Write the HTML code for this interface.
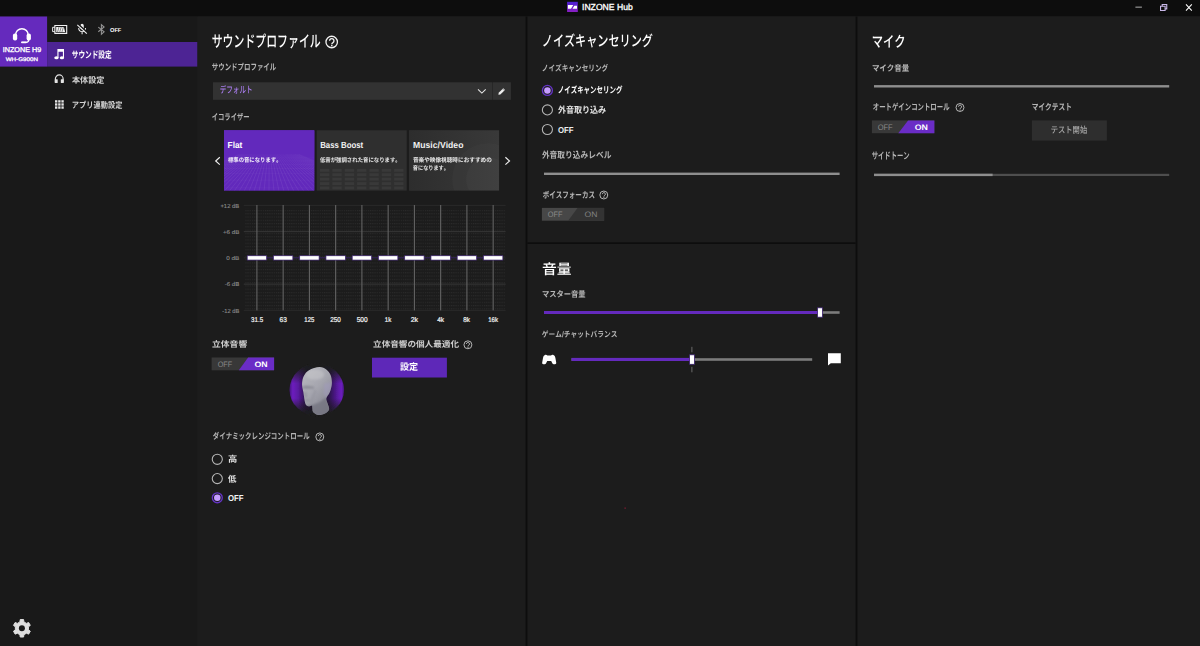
<!DOCTYPE html>
<html lang="ja"><head><meta charset="utf-8"><title>INZONE Hub</title><style>
html,body{margin:0;padding:0}
body{position:relative;width:1200px;height:646px;overflow:hidden;background:#1c1c1c;font-family:"Liberation Sans",sans-serif;font-kerning:none}
.b{position:absolute;display:block;overflow:visible;margin:0;padding:0;border:0}
button.b{appearance:none;-webkit-appearance:none;border-radius:0;background:none}
.jp{position:absolute;display:block;margin:0;padding:0;font-weight:normal;text-decoration:none;white-space:nowrap;transform-origin:0 0;text-indent:1px;font-family:"Liberation Sans","Noto Sans CJK JP",sans-serif;text-rendering:geometricPrecision}
.f{position:absolute;left:0;top:0;width:100%;height:100%;display:block}
.lt{position:absolute;display:block;white-space:nowrap;transform-origin:0 0;margin:0;padding:0;text-rendering:geometricPrecision}
</style></head>
<body>
<header>
<div class="b titlebar" style="left:0px;top:0px;width:1200px;height:17px;"><svg class="f" viewBox="0 0 1200 17"><rect x="0.00" y="0.00" width="1200.00" height="16.50" fill="#0d0d0d"/></svg></div>
<svg class="b" style="left:566px;top:0px;width:13px;height:13px;" viewBox="0 0 13 13"><svg x="1.10" y="1.80" width="10.70" height="10.20" viewBox="0 0 10.7 10.2" preserveAspectRatio="none" overflow="visible"><defs><linearGradient id="lg" x1="0" y1="0" x2="0" y2="1"><stop offset="0" stop-color="#4a1fd2"/><stop offset="1" stop-color="#8a1fc2"/></linearGradient></defs><rect width="10.7" height="10.2" fill="url(#lg)"/><path d="M.8 3.1H6.2L3.9 6.9H.8zM7.2 3.9L5.4 6.9H9.9V3.9z" fill="#fff"/></svg></svg>
<span class="lt apptitle" style="left:582px;top:2px;font-size:87.15px;line-height:87.15px;transform:translate(0.00px,0.54px) scale(0.0989,0.1000);color:#fff;-webkit-text-stroke:3.20px #fff;">INZONE Hub</span>
<svg class="b" style="left:1134px;top:5px;width:9px;height:4px;" viewBox="0 0 9 4"><svg x="1.40" y="1.60" width="6.50" height="1.10" viewBox="0 0 6.5 1.1" preserveAspectRatio="none" overflow="visible"><rect width="6.5" height="1.1" fill="#a0a0a0"/></svg></svg>
<svg class="b" style="left:1159px;top:3px;width:10px;height:9px;" viewBox="0 0 10 9"><svg x="1.00" y="1.00" width="7.30" height="7.00" viewBox="0 0 7.3 7" preserveAspectRatio="none" overflow="visible"><path d="M.55 2.2H5.1V6.5H.55z" fill="none" stroke="#c9b8e8" stroke-width="1.1"/><path d="M2.2 2.2V.55H6.75V4.9H5.1" fill="none" stroke="#c9b8e8" stroke-width="1.1"/></svg></svg>
<svg class="b" style="left:1184px;top:3px;width:10px;height:9px;" viewBox="0 0 10 9"><svg x="1.60" y="1.00" width="6.60" height="7.00" viewBox="0 0 6.6 7" preserveAspectRatio="none" overflow="visible"><path d="M.4.4L6.2 6.6M6.2.4L.4 6.6" stroke="#fff" stroke-width="1.05" fill="none"/></svg></svg>
</header>
<nav>
<div class="b sidebar" style="left:0px;top:16px;width:198px;height:630px;"><svg class="f" viewBox="0 0 198 630"><rect x="0.00" y="0.50" width="197.50" height="629.50" fill="#191919"/></svg></div>
<div class="b device" style="left:0px;top:16px;width:48px;height:51px;"><svg class="f" viewBox="0 0 48 51"><rect x="0.00" y="0.50" width="47.10" height="50.10" fill="#652abd"/></svg></div>
<svg class="b" style="left:11px;top:25px;width:22px;height:20px;" viewBox="0 0 22 20"><svg x="1.40" y="1.60" width="19.00" height="16.70" viewBox="0 0 19 16.7" preserveAspectRatio="none" overflow="visible"><path d="M3.2 9.6V8.4a6.3 6.3 0 0 1 12.6 0V9.6" fill="none" stroke="#fff" stroke-width="1.5"/><rect x=".5" y="6.9" width="4.3" height="6.9" rx="1.9" fill="#fff"/><rect x="14.2" y="6.9" width="4.3" height="6.9" rx="1.9" fill="#fff"/><path d="M16.3 13.2c0 1.6-.8 2.5-2.6 2.5H9.4" fill="none" stroke="#fff" stroke-width="1.3" stroke-linecap="round"/><rect x="8.9" y="14.8" width="5.2" height="1.8" rx=".4" fill="#fff"/></svg></svg>
<span class="lt devname" style="left:2px;top:46px;font-size:69.21px;line-height:69.21px;transform:translate(0.63px,0.27px) scale(0.1049,0.1000);color:#fff;-webkit-text-stroke:3.00px #fff;">INZONE H9</span>
<span class="lt devmodel" style="left:5px;top:56px;font-size:52.26px;line-height:52.26px;transform:translate(0.67px,0.72px) scale(0.1194,0.1000);color:#fff;-webkit-text-stroke:2.60px #fff;">WH-G900N</span>
<svg class="b" style="left:51px;top:24px;width:18px;height:11px;" viewBox="0 0 18 11"><svg x="1.00" y="1.00" width="15.30" height="8.90" viewBox="0 0 15.3 8.9" preserveAspectRatio="none" overflow="visible"><path d="M2.85.5H14.700V8.400H2.850z" fill="none" stroke="#f2f2f2" stroke-width="1.1"/><path d="M2.850 2.300H.600V6.600H2.850" fill="none" stroke="#f2f2f2" stroke-width=".95"/><path d="M4.200 6.900V2H11.900L13.100 6.900z" fill="#f2f2f2"/><path d="M5.600 6.900L7 2M7.800 6.900L9.200 2M10 6.900L11.400 2" stroke="#191919" stroke-width=".5"/></svg></svg>
<svg class="b" style="left:75px;top:22px;width:14px;height:14px;" viewBox="0 0 14 14"><svg x="1.80" y="1.60" width="10.60" height="11.00" viewBox="0 0 10.6 11" preserveAspectRatio="none" overflow="visible"><rect x="3.65" y=".2" width="3.3" height="5.7" rx="1.65" fill="#f2f2f2"/><path d="M1.9 4.5c0 2.2 1.5 3.6 3.4 3.6s3.4-1.4 3.4-3.6M5.3 8.1V10.6" fill="none" stroke="#f2f2f2" stroke-width="1.05"/><path d="M1.300.5L10.800 9.300" stroke="#191919" stroke-width="1.5"/><path d="M.5 1.200L10 10" stroke="#f2f2f2" stroke-width="1.15"/></svg></svg>
<svg class="b" style="left:96px;top:23px;width:11px;height:13px;" viewBox="0 0 11 13"><svg x="1.40" y="1.00" width="8.10" height="10.80" viewBox="0 0 8.1 10.8" preserveAspectRatio="none" overflow="visible"><path d="M.9 3.1L6.7 7.8 4 10.2V.6L6.7 3 .9 7.7" fill="none" stroke="#929292" stroke-width="1.1" stroke-linejoin="miter"/></svg></svg>
<span class="lt btstate" style="left:109px;top:27px;font-size:56.50px;line-height:56.50px;transform:translate(0.97px,0.46px) scale(0.1004,0.1000);color:#fff;font-weight:700;">OFF</span>
<div class="b navsel" style="left:47px;top:42px;width:151px;height:25px;"><svg class="f" viewBox="0 0 151 25"><rect x="0.10" y="0.00" width="150.40" height="24.60" fill="#4d2494"/></svg></div>
<svg class="b" style="left:53px;top:48px;width:13px;height:13px;" viewBox="0 0 13 13"><svg x="1.20" y="1.00" width="10.10" height="10.40" viewBox="0 0 10.1 10.4" preserveAspectRatio="none" overflow="visible"><path d="M3.200.1H9.800V8.800H8.700V2.700H4.300V8.800H3.200z" fill="#fff"/><ellipse cx="2.25" cy="8.750" rx="2.15" ry="1.6" fill="#fff"/><ellipse cx="7.75" cy="8.750" rx="2.15" ry="1.6" fill="#fff"/></svg></svg>
<a class="jp navtxt" style="left:71px;top:49px;width:42px;height:12px;color:#fff;font-size:9.2px;line-height:12px;font-weight:700;transform:scaleX(0.725);">サウンド設定</a>
<svg class="b" style="left:53px;top:72px;width:13px;height:13px;" viewBox="0 0 13 13"><svg x="1.30" y="1.90" width="9.90" height="9.30" viewBox="0 0 9.9 9.3" preserveAspectRatio="none" overflow="visible"><path d="M1.1 8.6V4.9a3.85 3.85 0 0 1 7.7 0V8.6" fill="none" stroke="#e4e4e4" stroke-width="1.2"/><rect x=".5" y="5.3" width="2.9" height="3.9" rx=".5" fill="#e4e4e4"/><rect x="6.5" y="5.3" width="2.9" height="3.9" rx=".5" fill="#e4e4e4"/></svg></svg>
<a class="jp navtxt" style="left:71px;top:75px;width:34px;height:11px;color:#d2d2d2;font-size:8.25px;line-height:11px;font-weight:700;transform:scaleX(0.98);">本体設定</a>
<svg class="b" style="left:54px;top:99px;width:11px;height:11px;" viewBox="0 0 11 11"><svg x="1.00" y="1.20" width="8.75" height="8.55" viewBox="0 0 8.75 8.55" preserveAspectRatio="none" overflow="visible"><rect x="0.00" y="0.00" width="2.35" height="2.35" fill="#e4e4e4"/><rect x="0.00" y="3.10" width="2.35" height="2.35" fill="#e4e4e4"/><rect x="0.00" y="6.20" width="2.35" height="2.35" fill="#e4e4e4"/><rect x="3.20" y="0.00" width="2.35" height="2.35" fill="#e4e4e4"/><rect x="3.20" y="3.10" width="2.35" height="2.35" fill="#e4e4e4"/><rect x="3.20" y="6.20" width="2.35" height="2.35" fill="#e4e4e4"/><rect x="6.40" y="0.00" width="2.35" height="2.35" fill="#e4e4e4"/><rect x="6.40" y="3.10" width="2.35" height="2.35" fill="#e4e4e4"/><rect x="6.40" y="6.20" width="2.35" height="2.35" fill="#e4e4e4"/></svg></svg>
<a class="jp navtxt" style="left:71px;top:100px;width:52px;height:10px;color:#d2d2d2;font-size:8.42px;line-height:10px;font-weight:700;transform:scaleX(0.86);">アプリ連動設定</a>
<svg class="b" style="left:10px;top:617px;width:23px;height:23px;" viewBox="0 0 23 23"><svg x="1.90" y="1.30" width="20.00" height="20.00" viewBox="0 0 20 20" preserveAspectRatio="none" overflow="visible"><path d="M8.02 3.60L8.32 1.26L11.68 1.26L11.98 3.60L14.55 5.08L16.73 4.17L18.41 7.09L16.53 8.51L16.53 11.49L18.41 12.91L16.73 15.83L14.55 14.92L11.98 16.40L11.68 18.74L8.32 18.74L8.02 16.40L5.45 14.92L3.27 15.83L1.59 12.91L3.47 11.49L3.47 8.51L1.59 7.09L3.27 4.17L5.45 5.08z" fill="#dedede" stroke="#dedede" stroke-width="1" stroke-linejoin="round"/><circle cx="10" cy="10" r="3.0" fill="#191919"/></svg></svg>
</nav>
<div class="b main" style="left:197px;top:16px;width:1003px;height:630px;"><svg class="f" viewBox="0 0 1003 630"><rect x="0.50" y="0.50" width="1002.50" height="629.50" fill="#1c1c1c"/></svg></div>
<div class="b vdiv" style="left:525px;top:16px;width:3px;height:630px;"><svg class="f" viewBox="0 0 3 630"><rect x="0.60" y="0.50" width="1.80" height="629.50" fill="#0d0d0d"/></svg></div>
<div class="b vdiv" style="left:855px;top:16px;width:3px;height:630px;"><svg class="f" viewBox="0 0 3 630"><rect x="0.60" y="0.50" width="1.80" height="629.50" fill="#0d0d0d"/></svg></div>
<div class="b hdiv" style="left:527px;top:242px;width:329px;height:2px;"><svg class="f" viewBox="0 0 329 2"><rect x="0.40" y="0.30" width="328.20" height="1.70" fill="#0d0d0d"/></svg></div>
<section class="sound">
<h2 class="jp h1" style="left:211px;top:33px;width:112px;height:18px;color:#fff;font-size:16.07px;line-height:18px;font-weight:500;transform:scaleX(0.679);">サウンドプロファイル</h2>
<svg class="b" style="left:324px;top:34px;width:16px;height:16px;color:#f2f2f2;" viewBox="0 0 16 16"><svg x="1.25" y="1.55" width="12.90" height="12.90" viewBox="0 0 20 20" preserveAspectRatio="none" overflow="visible"><circle cx="10" cy="10" r="8.9" fill="none" stroke="currentColor" stroke-width="2"/><path d="M6.700 8.100a3.400 3.400 0 1 1 5.200 2.900c-1.200.700-1.700 1.300-1.700 2.600" fill="none" stroke="currentColor" stroke-width="2.100"/><circle cx="10.150" cy="15.700" r="1.250" fill="currentColor"/></svg></svg>
<label class="jp lbl" style="left:211px;top:62px;width:67px;height:11px;color:#b6b6b6;font-size:8.53px;line-height:11px;font-weight:700;transform:scaleX(0.757);">サウンドプロファイル</label>
<div class="b select" style="left:213px;top:82px;width:279px;height:18px;"><svg class="f" viewBox="0 0 279 18"><rect x="0.00" y="0.30" width="279.00" height="17.50" fill="#323232"/></svg></div>
<div class="b seldiv" style="left:492px;top:82px;width:1px;height:18px;"><svg class="f" viewBox="0 0 1 18"><rect x="0.00" y="0.30" width="0.90" height="17.50" fill="#292929"/></svg></div>
<div class="b editbtn" style="left:492px;top:82px;width:19px;height:18px;"><svg class="f" viewBox="0 0 19 18"><rect x="0.90" y="0.30" width="18.00" height="17.50" fill="#323232"/></svg></div>
<span class="jp selval" style="left:219px;top:85px;width:35px;height:11px;color:#a87cec;font-size:9.25px;line-height:11px;font-weight:500;transform:scaleX(0.71);">デフォルト</span>
<svg class="b" style="left:476px;top:87px;width:12px;height:8px;" viewBox="0 0 12 8"><svg x="1.60" y="1.90" width="8.50" height="4.80" viewBox="0 0 8.5 4.8" preserveAspectRatio="none" overflow="visible"><path d="M.4.5L4.25 4.2 8.1.5" fill="none" stroke="#e6e6e6" stroke-width="1.05"/></svg></svg>
<svg class="b" style="left:497px;top:86px;width:10px;height:10px;" viewBox="0 0 10 10"><svg x="1.00" y="1.70" width="7.50" height="7.20" viewBox="0 0 7.5 7.2" preserveAspectRatio="none" overflow="visible"><path d="M5.3.5L7 2.2 2.3 6.8.4 7 .7 5.1z" fill="#eee"/><path d="M4.6 1.2L6.3 2.9" stroke="#323232" stroke-width=".5"/></svg></svg>
<label class="jp lbl" style="left:211px;top:112px;width:40px;height:11px;color:#b6b6b6;font-size:8.54px;line-height:11px;font-weight:700;transform:scaleX(0.74);">イコライザー</label>
<svg class="b" style="left:213px;top:155px;width:9px;height:12px;" viewBox="0 0 9 12"><svg x="1.90" y="1.80" width="5.50" height="8.30" viewBox="0 0 5.5 8.3" preserveAspectRatio="none" overflow="visible"><path d="M4.9.5L.8 4.15 4.9 7.8" fill="none" stroke="#f0f0f0" stroke-width="1.15"/></svg></svg>
<svg class="b" style="left:503px;top:155px;width:9px;height:12px;" viewBox="0 0 9 12"><svg x="1.80" y="1.80" width="5.50" height="8.30" viewBox="0 0 5.5 8.3" preserveAspectRatio="none" overflow="visible"><path d="M.6.5L4.7 4.15.6 7.8" fill="none" stroke="#f0f0f0" stroke-width="1.15"/></svg></svg>
<div class="b tile flat" style="left:224px;top:130px;width:91px;height:61px;"><svg class="f" viewBox="0 0 91 61"><rect x="0.00" y="0.30" width="90.40" height="60.30" fill="#6229bc"/><svg x="0.00" y="0.30" width="90.40" height="60.30" viewBox="0 0 90.40 60.30" preserveAspectRatio="none"><rect width="90.4" height="60.3" fill="#6229bc"/><path d="M15.2 24L-70.0 61" stroke="#fff" stroke-opacity=".075" stroke-width=".9"/><path d="M16.5 24L-65.0 61" stroke="#fff" stroke-opacity=".075" stroke-width=".9"/><path d="M17.8 24L-60.0 61" stroke="#fff" stroke-opacity=".075" stroke-width=".9"/><path d="M19.1 24L-55.0 61" stroke="#fff" stroke-opacity=".075" stroke-width=".9"/><path d="M20.4 24L-50.0 61" stroke="#fff" stroke-opacity=".075" stroke-width=".9"/><path d="M21.7 24L-45.0 61" stroke="#fff" stroke-opacity=".075" stroke-width=".9"/><path d="M23.0 24L-40.0 61" stroke="#fff" stroke-opacity=".075" stroke-width=".9"/><path d="M24.3 24L-35.0 61" stroke="#fff" stroke-opacity=".075" stroke-width=".9"/><path d="M25.6 24L-30.0 61" stroke="#fff" stroke-opacity=".075" stroke-width=".9"/><path d="M26.9 24L-25.0 61" stroke="#fff" stroke-opacity=".075" stroke-width=".9"/><path d="M28.2 24L-20.0 61" stroke="#fff" stroke-opacity=".075" stroke-width=".9"/><path d="M29.5 24L-15.0 61" stroke="#fff" stroke-opacity=".075" stroke-width=".9"/><path d="M30.8 24L-10.0 61" stroke="#fff" stroke-opacity=".075" stroke-width=".9"/><path d="M32.1 24L-5.0 61" stroke="#fff" stroke-opacity=".075" stroke-width=".9"/><path d="M33.4 24L0.0 61" stroke="#fff" stroke-opacity=".075" stroke-width=".9"/><path d="M34.7 24L5.0 61" stroke="#fff" stroke-opacity=".075" stroke-width=".9"/><path d="M36.0 24L10.0 61" stroke="#fff" stroke-opacity=".075" stroke-width=".9"/><path d="M37.3 24L15.0 61" stroke="#fff" stroke-opacity=".075" stroke-width=".9"/><path d="M38.6 24L20.0 61" stroke="#fff" stroke-opacity=".075" stroke-width=".9"/><path d="M39.9 24L25.0 61" stroke="#fff" stroke-opacity=".075" stroke-width=".9"/><path d="M41.2 24L30.0 61" stroke="#fff" stroke-opacity=".075" stroke-width=".9"/><path d="M42.5 24L35.0 61" stroke="#fff" stroke-opacity=".075" stroke-width=".9"/><path d="M43.8 24L40.0 61" stroke="#fff" stroke-opacity=".075" stroke-width=".9"/><path d="M45.1 24L45.0 61" stroke="#fff" stroke-opacity=".075" stroke-width=".9"/><path d="M46.4 24L50.0 61" stroke="#fff" stroke-opacity=".075" stroke-width=".9"/><path d="M47.7 24L55.0 61" stroke="#fff" stroke-opacity=".075" stroke-width=".9"/><path d="M49.0 24L60.0 61" stroke="#fff" stroke-opacity=".075" stroke-width=".9"/><path d="M50.3 24L65.0 61" stroke="#fff" stroke-opacity=".075" stroke-width=".9"/><path d="M51.6 24L70.0 61" stroke="#fff" stroke-opacity=".075" stroke-width=".9"/><path d="M52.9 24L75.0 61" stroke="#fff" stroke-opacity=".075" stroke-width=".9"/><path d="M54.2 24L80.0 61" stroke="#fff" stroke-opacity=".075" stroke-width=".9"/><path d="M55.5 24L85.0 61" stroke="#fff" stroke-opacity=".075" stroke-width=".9"/><path d="M56.8 24L90.0 61" stroke="#fff" stroke-opacity=".075" stroke-width=".9"/><path d="M58.1 24L95.0 61" stroke="#fff" stroke-opacity=".075" stroke-width=".9"/><path d="M59.4 24L100.0 61" stroke="#fff" stroke-opacity=".075" stroke-width=".9"/><path d="M60.7 24L105.0 61" stroke="#fff" stroke-opacity=".075" stroke-width=".9"/><path d="M62.0 24L110.0 61" stroke="#fff" stroke-opacity=".075" stroke-width=".9"/><path d="M63.3 24L115.0 61" stroke="#fff" stroke-opacity=".075" stroke-width=".9"/><path d="M64.6 24L120.0 61" stroke="#fff" stroke-opacity=".075" stroke-width=".9"/><path d="M65.9 24L125.0 61" stroke="#fff" stroke-opacity=".075" stroke-width=".9"/><path d="M67.2 24L130.0 61" stroke="#fff" stroke-opacity=".075" stroke-width=".9"/><path d="M68.5 24L135.0 61" stroke="#fff" stroke-opacity=".075" stroke-width=".9"/><path d="M69.8 24L140.0 61" stroke="#fff" stroke-opacity=".075" stroke-width=".9"/><path d="M71.1 24L145.0 61" stroke="#fff" stroke-opacity=".075" stroke-width=".9"/><path d="M72.4 24L150.0 61" stroke="#fff" stroke-opacity=".075" stroke-width=".9"/><path d="M73.7 24L155.0 61" stroke="#fff" stroke-opacity=".075" stroke-width=".9"/><path d="M75.0 24L160.0 61" stroke="#fff" stroke-opacity=".075" stroke-width=".9"/><path d="M0 27.5H90.4" stroke="#fff" stroke-opacity=".045" stroke-width=".7"/><path d="M0 30.5H90.4" stroke="#fff" stroke-opacity=".045" stroke-width=".7"/><path d="M0 34.0H90.4" stroke="#fff" stroke-opacity=".045" stroke-width=".7"/><path d="M0 38.2H90.4" stroke="#fff" stroke-opacity=".045" stroke-width=".7"/><path d="M0 43.4H90.4" stroke="#fff" stroke-opacity=".045" stroke-width=".7"/><path d="M0 49.8H90.4" stroke="#fff" stroke-opacity=".045" stroke-width=".7"/><path d="M0 57.6H90.4" stroke="#fff" stroke-opacity=".045" stroke-width=".7"/><defs><linearGradient id="fg" x1="0" y1="0" x2="0" y2="1"><stop offset="0" stop-color="#6229bc"/><stop offset=".28" stop-color="#6229bc" stop-opacity=".95"/><stop offset=".62" stop-color="#6229bc" stop-opacity="0"/></linearGradient></defs><rect width="90.4" height="60.3" fill="url(#fg)"/></svg></svg></div>
<div class="b tile bass" style="left:316px;top:130px;width:91px;height:61px;"><svg class="f" viewBox="0 0 91 61"><rect x="0.70" y="0.30" width="90.00" height="60.30" fill="#2f2f2f"/><svg x="0.70" y="0.30" width="90.00" height="60.30" viewBox="0 0 90.00 60.30" preserveAspectRatio="none"><rect x="3.30" y="38.60" width="9.4" height="2.9" fill="#393939"/><rect x="3.30" y="43.00" width="9.4" height="2.9" fill="#393939"/><rect x="3.30" y="47.40" width="9.4" height="2.9" fill="#393939"/><rect x="3.30" y="51.80" width="9.4" height="2.9" fill="#393939"/><rect x="3.30" y="56.20" width="9.4" height="2.9" fill="#393939"/><rect x="15.65" y="38.60" width="9.4" height="2.9" fill="#393939"/><rect x="15.65" y="43.00" width="9.4" height="2.9" fill="#393939"/><rect x="15.65" y="47.40" width="9.4" height="2.9" fill="#393939"/><rect x="15.65" y="51.80" width="9.4" height="2.9" fill="#393939"/><rect x="15.65" y="56.20" width="9.4" height="2.9" fill="#393939"/><rect x="28.00" y="38.60" width="9.4" height="2.9" fill="#393939"/><rect x="28.00" y="43.00" width="9.4" height="2.9" fill="#393939"/><rect x="28.00" y="47.40" width="9.4" height="2.9" fill="#393939"/><rect x="28.00" y="51.80" width="9.4" height="2.9" fill="#393939"/><rect x="28.00" y="56.20" width="9.4" height="2.9" fill="#393939"/><rect x="40.35" y="38.60" width="9.4" height="2.9" fill="#393939"/><rect x="40.35" y="43.00" width="9.4" height="2.9" fill="#393939"/><rect x="40.35" y="47.40" width="9.4" height="2.9" fill="#393939"/><rect x="40.35" y="51.80" width="9.4" height="2.9" fill="#393939"/><rect x="40.35" y="56.20" width="9.4" height="2.9" fill="#393939"/><rect x="52.70" y="38.60" width="9.4" height="2.9" fill="#393939"/><rect x="52.70" y="43.00" width="9.4" height="2.9" fill="#393939"/><rect x="52.70" y="47.40" width="9.4" height="2.9" fill="#393939"/><rect x="52.70" y="51.80" width="9.4" height="2.9" fill="#393939"/><rect x="52.70" y="56.20" width="9.4" height="2.9" fill="#393939"/><rect x="65.05" y="38.60" width="9.4" height="2.9" fill="#393939"/><rect x="65.05" y="43.00" width="9.4" height="2.9" fill="#393939"/><rect x="65.05" y="47.40" width="9.4" height="2.9" fill="#393939"/><rect x="65.05" y="51.80" width="9.4" height="2.9" fill="#393939"/><rect x="65.05" y="56.20" width="9.4" height="2.9" fill="#393939"/><rect x="77.40" y="38.60" width="9.4" height="2.9" fill="#393939"/><rect x="77.40" y="43.00" width="9.4" height="2.9" fill="#393939"/><rect x="77.40" y="47.40" width="9.4" height="2.9" fill="#393939"/><rect x="77.40" y="51.80" width="9.4" height="2.9" fill="#393939"/><rect x="77.40" y="56.20" width="9.4" height="2.9" fill="#393939"/></svg></svg></div>
<div class="b tile music" style="left:409px;top:130px;width:91px;height:61px;"><svg class="f" viewBox="0 0 91 61"><rect x="0.10" y="0.30" width="90.00" height="60.30" fill="#303030"/><svg x="0.10" y="0.30" width="90.00" height="60.30" viewBox="0 0 90.00 60.30" preserveAspectRatio="none"><defs><linearGradient id="mg" x1="0" y1="0" x2="1" y2="0"><stop offset="0" stop-color="#2d2d2d"/><stop offset="1" stop-color="#393939"/></linearGradient></defs><rect width="90" height="60.3" fill="url(#mg)"/><circle cx="79" cy="49" r="36" fill="#fff" fill-opacity=".018"/><circle cx="79" cy="49" r="22" fill="#fff" fill-opacity=".022"/></svg></svg></div>
<span class="lt tname" style="left:227px;top:140px;font-size:89.00px;line-height:89.00px;transform:translate(0.54px,0.21px) scale(0.0939,0.1000);color:#fff;font-weight:700;">Flat</span>
<span class="jp tdesc" style="left:227px;top:157px;width:53px;height:9px;color:#f4f0fa;font-size:6.04px;line-height:9px;font-weight:700;transform:scaleX(0.89);">標準の音になります。</span>
<span class="lt tname" style="left:320px;top:140px;font-size:89.00px;line-height:89.00px;transform:translate(0.18px,0.21px) scale(0.0879,0.1000);color:#f2f2f2;font-weight:700;">Bass Boost</span>
<span class="jp tdesc" style="left:319px;top:157px;width:81px;height:9px;color:#e8e8e8;font-size:5.93px;line-height:9px;font-weight:700;transform:scaleX(0.91);">低音が強調された音になります。</span>
<span class="lt tname" style="left:413px;top:140px;font-size:89.00px;line-height:89.00px;transform:translate(0.02px,0.21px) scale(0.0971,0.1000);color:#f2f2f2;font-weight:700;">Music/Video</span>
<span class="jp tdesc" style="left:412px;top:157px;width:82px;height:9px;color:#e8e8e8;font-size:6.04px;line-height:9px;font-weight:700;transform:scaleX(0.934);">音楽や映像視聴時におすすめの</span>
<span class="jp tdesc" style="left:412px;top:165px;width:36px;height:9px;color:#e8e8e8;font-size:5.96px;line-height:9px;font-weight:700;transform:scaleX(0.865);">音になります。</span>
<svg class="b eq" style="left:0;top:0;width:1200px;height:646px" viewBox="0 0 1200 646"><defs><pattern id="dots" x="0" y="0" width="2.19" height="3.28" patternUnits="userSpaceOnUse"><rect x="0" y="0" width="1.1" height="1.1" fill="#2b2b2b"/></pattern></defs><rect x="245.30" y="208.00" width="260.30" height="102.40" fill="url(#dots)"/><rect x="243.80" y="204.90" width="261.80" height="1" fill="#2a2a2a"/><rect x="243.80" y="231.15" width="261.80" height="1" fill="#363636"/><rect x="243.80" y="257.40" width="261.80" height="1" fill="#2a2a2a"/><rect x="243.80" y="283.65" width="261.80" height="1" fill="#363636"/><rect x="243.80" y="309.90" width="261.80" height="1" fill="#2a2a2a"/><rect x="256.35" y="205.00" width="1.1" height="105.40" fill="#636363"/><rect x="282.60" y="205.00" width="1.1" height="105.40" fill="#636363"/><rect x="308.85" y="205.00" width="1.1" height="105.40" fill="#636363"/><rect x="335.10" y="205.00" width="1.1" height="105.40" fill="#636363"/><rect x="361.35" y="205.00" width="1.1" height="105.40" fill="#636363"/><rect x="387.60" y="205.00" width="1.1" height="105.40" fill="#636363"/><rect x="413.85" y="205.00" width="1.1" height="105.40" fill="#636363"/><rect x="440.10" y="205.00" width="1.1" height="105.40" fill="#636363"/><rect x="466.35" y="205.00" width="1.1" height="105.40" fill="#636363"/><rect x="492.60" y="205.00" width="1.1" height="105.40" fill="#636363"/><rect x="256.90" y="257.30" width="236.25" height="1" fill="#34205e"/><rect x="247.20" y="255.75" width="19.4" height="4.3" fill="#fff" stroke="#3a1f70" stroke-width=".7"/><rect x="273.45" y="255.75" width="19.4" height="4.3" fill="#fff" stroke="#3a1f70" stroke-width=".7"/><rect x="299.70" y="255.75" width="19.4" height="4.3" fill="#fff" stroke="#3a1f70" stroke-width=".7"/><rect x="325.95" y="255.75" width="19.4" height="4.3" fill="#fff" stroke="#3a1f70" stroke-width=".7"/><rect x="352.20" y="255.75" width="19.4" height="4.3" fill="#fff" stroke="#3a1f70" stroke-width=".7"/><rect x="378.45" y="255.75" width="19.4" height="4.3" fill="#fff" stroke="#3a1f70" stroke-width=".7"/><rect x="404.70" y="255.75" width="19.4" height="4.3" fill="#fff" stroke="#3a1f70" stroke-width=".7"/><rect x="430.95" y="255.75" width="19.4" height="4.3" fill="#fff" stroke="#3a1f70" stroke-width=".7"/><rect x="457.20" y="255.75" width="19.4" height="4.3" fill="#fff" stroke="#3a1f70" stroke-width=".7"/><rect x="483.45" y="255.75" width="19.4" height="4.3" fill="#fff" stroke="#3a1f70" stroke-width=".7"/></svg>
<span class="lt db" style="left:220px;top:202px;font-size:58.55px;line-height:58.55px;transform:translate(0.41px,0.79px) scale(0.1010,0.1000);color:#8a8a8a;-webkit-text-stroke:1.20px #8a8a8a;">+12 dB</span>
<span class="lt db" style="left:222px;top:229px;font-size:55.83px;line-height:55.83px;transform:translate(0.90px,0.32px) scale(0.1114,0.1000);color:#8a8a8a;-webkit-text-stroke:1.20px #8a8a8a;">+6 dB</span>
<span class="lt db" style="left:226px;top:255px;font-size:55.83px;line-height:55.83px;transform:translate(0.25px,0.32px) scale(0.1139,0.1000);color:#8a8a8a;-webkit-text-stroke:1.20px #8a8a8a;">0 dB</span>
<span class="lt db" style="left:224px;top:281px;font-size:57.19px;line-height:57.19px;transform:translate(0.73px,0.60px) scale(0.1068,0.1000);color:#8a8a8a;-webkit-text-stroke:1.20px #8a8a8a;">-6 dB</span>
<span class="lt db" style="left:222px;top:307px;font-size:58.55px;line-height:58.55px;transform:translate(0.34px,0.89px) scale(0.0983,0.1000);color:#8a8a8a;-webkit-text-stroke:1.20px #8a8a8a;">-12 dB</span>
<span class="lt hz" style="left:251px;top:315px;font-size:70.62px;line-height:70.62px;transform:translate(0.07px,0.75px) scale(0.0873,0.1000);color:#f4f4f4;-webkit-text-stroke:2.20px #f4f4f4;">31.5</span>
<span class="lt hz" style="left:279px;top:315px;font-size:70.62px;line-height:70.62px;transform:translate(0.47px,0.75px) scale(0.0932,0.1000);color:#f4f4f4;-webkit-text-stroke:2.20px #f4f4f4;">63</span>
<span class="lt hz" style="left:304px;top:315px;font-size:70.62px;line-height:70.62px;transform:translate(0.35px,0.75px) scale(0.0840,0.1000);color:#f4f4f4;-webkit-text-stroke:2.20px #f4f4f4;">125</span>
<span class="lt hz" style="left:330px;top:315px;font-size:70.62px;line-height:70.62px;transform:translate(0.28px,0.75px) scale(0.0897,0.1000);color:#f4f4f4;-webkit-text-stroke:2.20px #f4f4f4;">250</span>
<span class="lt hz" style="left:356px;top:315px;font-size:70.62px;line-height:70.62px;transform:translate(0.64px,0.75px) scale(0.0927,0.1000);color:#f4f4f4;-webkit-text-stroke:2.20px #f4f4f4;">500</span>
<span class="lt hz" style="left:384px;top:315px;font-size:69.00px;line-height:69.00px;transform:translate(0.83px,0.96px) scale(0.0886,0.1000);color:#f4f4f4;-webkit-text-stroke:2.20px #f4f4f4;">1k</span>
<span class="lt hz" style="left:410px;top:315px;font-size:69.00px;line-height:69.00px;transform:translate(0.65px,0.96px) scale(0.1007,0.1000);color:#f4f4f4;-webkit-text-stroke:2.20px #f4f4f4;">2k</span>
<span class="lt hz" style="left:437px;top:315px;font-size:69.00px;line-height:69.00px;transform:translate(0.15px,0.96px) scale(0.0938,0.1000);color:#f4f4f4;-webkit-text-stroke:2.20px #f4f4f4;">4k</span>
<span class="lt hz" style="left:463px;top:315px;font-size:68.09px;line-height:68.09px;transform:translate(0.33px,0.97px) scale(0.0927,0.1000);color:#f4f4f4;-webkit-text-stroke:2.20px #f4f4f4;">8k</span>
<span class="lt hz" style="left:488px;top:315px;font-size:68.09px;line-height:68.09px;transform:translate(0.24px,0.97px) scale(0.0888,0.1000);color:#f4f4f4;-webkit-text-stroke:2.20px #f4f4f4;">16k</span>
<label class="jp lbl" style="left:211px;top:339px;width:37px;height:11px;color:#cfcfcf;font-size:8.29px;line-height:11px;font-weight:700;transform:scaleX(1.06);">立体音響</label>
<svg class="b" style="left:210px;top:356px;width:66px;height:16px;" viewBox="0 0 66 16"><svg x="1.60" y="1.50" width="62.50" height="12.80" viewBox="0 0 62.500 12.800" preserveAspectRatio="none" overflow="visible"><rect width="62.50" height="12.80" fill="#383838"/><path d="M36.50 0H62.50V12.80H27.20z" fill="#6a2cc6"/></svg></svg>
<span class="lt tgl" style="left:217px;top:360px;font-size:79.10px;line-height:79.10px;transform:translate(0.66px,0.13px) scale(0.0919,0.1000);color:#8a8a8a;">OFF</span>
<span class="lt tgl" style="left:254px;top:360px;font-size:79.10px;line-height:79.10px;transform:translate(0.44px,0.13px) scale(0.1117,0.1000);color:#fff;font-weight:700;">ON</span>
<svg class="b" style="left:288px;top:362px;width:58px;height:55px;" viewBox="0 0 58 55"><svg x="1.20" y="1.60" width="55.20" height="52.40" viewBox="0 0 55.2 52.4" preserveAspectRatio="none" overflow="visible"><defs><linearGradient id="hg" x1="0" y1="0" x2="1" y2="0"><stop offset="0" stop-color="#45147e"/><stop offset=".06" stop-color="#6c1ebe"/><stop offset=".16" stop-color="#5a1aa0"/><stop offset=".3" stop-color="#2a1246"/><stop offset=".5" stop-color="#1c0f2e"/><stop offset=".72" stop-color="#2a1246"/><stop offset=".87" stop-color="#561a9a"/><stop offset=".95" stop-color="#6c1ebe"/><stop offset="1" stop-color="#45147e"/></linearGradient><linearGradient id="hv" x1="0" y1="0" x2="0" y2="1"><stop offset="0" stop-color="#1c1c1c" stop-opacity="1"/><stop offset=".12" stop-color="#1c1c1c" stop-opacity=".8"/><stop offset=".38" stop-color="#1c1c1c" stop-opacity="0"/><stop offset=".66" stop-color="#1c1c1c" stop-opacity="0"/><stop offset=".9" stop-color="#1c1c1c" stop-opacity=".8"/><stop offset="1" stop-color="#1c1c1c" stop-opacity="1"/></linearGradient><linearGradient id="hs" x1=".15" y1="0" x2=".85" y2="1"><stop offset="0" stop-color="#b9b9bf"/><stop offset=".45" stop-color="#a5a5ae"/><stop offset="1" stop-color="#7c7c88"/></linearGradient><clipPath id="hc"><ellipse cx="27.6" cy="26.2" rx="27.6" ry="26.2"/></clipPath><clipPath id="hp"><path d="M30.2 3.5C27.3 3.6 22.4 5.1 19.8 6.6C17.2 8.1 15.8 10.2 14.6 12.3C13.4 14.4 13.1 17.2 12.9 19.2C12.7 21.2 13.1 22.8 13.3 24.4C13.5 26.0 13.9 27.3 14.2 28.7C14.4 30.1 14.6 31.6 14.8 33.0C15.0 34.5 15.2 36.0 15.5 37.4C15.8 38.8 16.1 40.4 16.8 41.3C17.5 42.2 18.8 42.6 19.8 42.7C20.8 42.8 22.2 41.5 22.8 41.9C23.4 42.3 23.1 44.1 23.3 45.2C23.5 46.3 23.1 47.6 24.1 48.6C25.1 49.6 27.3 51.3 29.3 51.5C31.3 51.7 34.4 50.5 36.2 49.6C38.0 48.7 39.5 47.6 39.9 46.0C40.3 44.4 38.9 41.9 38.4 40.0C37.9 38.1 36.8 36.5 37.1 34.8C37.4 33.1 39.3 31.3 40.1 29.6C40.9 27.9 41.5 26.3 41.9 24.4C42.3 22.5 42.8 20.5 42.7 18.3C42.6 16.1 42.3 13.5 41.4 11.4C40.5 9.3 39.0 7.1 37.1 5.8C35.2 4.5 33.1 3.4 30.2 3.5z"/></clipPath><filter id="hb" x="-30%" y="-30%" width="160%" height="160%"><feGaussianBlur stdDeviation="1.3"/></filter><filter id="hb2" x="-5%" y="-5%" width="110%" height="110%"><feGaussianBlur stdDeviation=".35"/></filter></defs><g filter="url(#hb2)"><ellipse cx="27.6" cy="26.2" rx="27.3" ry="25.9" fill="url(#hg)"/><ellipse cx="27.6" cy="26.2" rx="27.9" ry="26.5" fill="url(#hv)"/></g><g clip-path="url(#hc)"><path d="M30.2 3.5C27.3 3.6 22.4 5.1 19.8 6.6C17.2 8.1 15.8 10.2 14.6 12.3C13.4 14.4 13.1 17.2 12.9 19.2C12.7 21.2 13.1 22.8 13.3 24.4C13.5 26.0 13.9 27.3 14.2 28.7C14.4 30.1 14.6 31.6 14.8 33.0C15.0 34.5 15.2 36.0 15.5 37.4C15.8 38.8 16.1 40.4 16.8 41.3C17.5 42.2 18.8 42.6 19.8 42.7C20.8 42.8 22.2 41.5 22.8 41.9C23.4 42.3 23.1 44.1 23.3 45.2C23.5 46.3 23.1 47.6 24.1 48.6C25.1 49.6 27.3 51.3 29.3 51.5C31.3 51.7 34.4 50.5 36.2 49.6C38.0 48.7 39.5 47.6 39.9 46.0C40.3 44.4 38.9 41.9 38.4 40.0C37.9 38.1 36.8 36.5 37.1 34.8C37.4 33.1 39.3 31.3 40.1 29.6C40.9 27.9 41.5 26.3 41.9 24.4C42.3 22.5 42.8 20.5 42.7 18.3C42.6 16.1 42.3 13.5 41.4 11.4C40.5 9.3 39.0 7.1 37.1 5.8C35.2 4.5 33.1 3.4 30.2 3.5z" fill="url(#hs)"/><g clip-path="url(#hp)"><g filter="url(#hb)"><path d="M17 42.500L23 41.500 30 39 37 34 41 46 37 52 24 52z" fill="#74747f" opacity=".8"/><path d="M13.500 22.800L17 22.200 24.500 23.200 25 25 17.500 24.800 13.800 25.200z" fill="#7e7e8a" opacity=".75"/><path d="M14.800 29L17.200 28 18 33.500 15.500 34.200z" fill="#8a8a96" opacity=".6"/><path d="M15.800 36.200L20 35.600 20.400 37.200 16.200 37.800z" fill="#80808c" opacity=".6"/><path d="M25.500 26L27 27 22.500 39.500 20.500 40z" fill="#8c8c98" opacity=".55"/><path d="M35 20L42 19 42.500 25 40 30.500 36.500 34 34.500 30z" fill="#a29cc0" opacity=".5"/><ellipse cx="26" cy="11" rx="9" ry="5" fill="#c9c9ce" opacity=".5"/></g></g></g></svg></svg>
<label class="jp lbl" style="left:372px;top:339px;width:88px;height:11px;color:#cfcfcf;font-size:8.28px;line-height:11px;font-weight:700;transform:scaleX(1.04);">立体音響の個人最適化</label>
<svg class="b" style="left:462px;top:339px;width:12px;height:12px;color:#c8c8c8;" viewBox="0 0 12 12"><svg x="1.45" y="1.35" width="8.90" height="8.90" viewBox="0 0 20 20" preserveAspectRatio="none" overflow="visible"><circle cx="10" cy="10" r="8.9" fill="none" stroke="currentColor" stroke-width="2"/><path d="M6.700 8.100a3.400 3.400 0 1 1 5.200 2.900c-1.200.700-1.700 1.300-1.700 2.600" fill="none" stroke="currentColor" stroke-width="2.100"/><circle cx="10.150" cy="15.700" r="1.250" fill="currentColor"/></svg></svg>
<button class="b btn" style="left:372px;top:357px;width:75px;height:21px;"><svg class="f" viewBox="0 0 75 21"><rect x="0.00" y="0.70" width="74.90" height="19.80" fill="#5e28b8"/></svg></button>
<span class="jp btntxt" style="left:399px;top:362px;width:21px;height:11px;color:#fff;font-size:9.22px;line-height:11px;font-weight:700;transform:scaleX(0.98);">設定</span>
<label class="jp lbl" style="left:212px;top:431px;width:99px;height:11px;color:#b6b6b6;font-size:8.33px;line-height:11px;font-weight:700;transform:scaleX(0.775);">ダイナミックレンジコントロール</label>
<svg class="b" style="left:314px;top:431px;width:12px;height:12px;color:#c8c8c8;" viewBox="0 0 12 12"><svg x="1.35" y="1.45" width="8.90" height="8.90" viewBox="0 0 20 20" preserveAspectRatio="none" overflow="visible"><circle cx="10" cy="10" r="8.9" fill="none" stroke="currentColor" stroke-width="2"/><path d="M6.700 8.100a3.400 3.400 0 1 1 5.200 2.900c-1.200.700-1.700 1.300-1.700 2.600" fill="none" stroke="currentColor" stroke-width="2.100"/><circle cx="10.150" cy="15.700" r="1.250" fill="currentColor"/></svg></svg>
<svg class="b" style="left:210px;top:452px;width:15px;height:15px;" viewBox="0 0 15 15"><svg x="1.50" y="1.50" width="11.60" height="11.60" viewBox="0 0 20 20" preserveAspectRatio="none" overflow="visible"><circle cx="10" cy="10" r="8.7" fill="none" stroke="#b4b4b4" stroke-width="1.9"/></svg></svg>
<span class="jp rl" style="left:227px;top:454px;width:11px;height:11px;color:#e2e2e2;font-size:8.6px;line-height:11px;font-weight:700;transform:scaleX(1.08);">高</span>
<svg class="b" style="left:210px;top:471px;width:15px;height:15px;" viewBox="0 0 15 15"><svg x="1.50" y="1.80" width="11.60" height="11.60" viewBox="0 0 20 20" preserveAspectRatio="none" overflow="visible"><circle cx="10" cy="10" r="8.7" fill="none" stroke="#b4b4b4" stroke-width="1.9"/></svg></svg>
<span class="jp rl" style="left:227px;top:474px;width:11px;height:11px;color:#e2e2e2;font-size:8.46px;line-height:11px;font-weight:700;transform:scaleX(0.99);">低</span>
<svg class="b" style="left:210px;top:491px;width:15px;height:14px;" viewBox="0 0 15 14"><svg x="1.50" y="1.00" width="11.60" height="11.60" viewBox="0 0 20 20" preserveAspectRatio="none" overflow="visible"><circle cx="10" cy="10" r="8.6" fill="#1c1c1c" stroke="#6434c6" stroke-width="2.3"/><circle cx="10" cy="10" r="5.6" fill="#c59cff"/></svg></svg>
<span class="lt rl" style="left:227px;top:493px;font-size:87.57px;line-height:87.57px;transform:translate(0.88px,0.70px) scale(0.0885,0.1000);color:#f4f4f4;font-weight:700;">OFF</span>
</section>
<section class="nc">
<h2 class="jp h1" style="left:541px;top:34px;width:113px;height:17px;color:#fff;font-size:14.69px;line-height:17px;font-weight:500;transform:scaleX(0.757);">ノイズキャンセリング</h2>
<label class="jp lbl" style="left:541px;top:63px;width:69px;height:11px;color:#b6b6b6;font-size:8.14px;line-height:11px;font-weight:700;transform:scaleX(0.817);">ノイズキャンセリング</label>
<svg class="b" style="left:540px;top:83px;width:15px;height:15px;" viewBox="0 0 15 15"><svg x="1.60" y="1.60" width="11.60" height="11.60" viewBox="0 0 20 20" preserveAspectRatio="none" overflow="visible"><circle cx="10" cy="10" r="8.6" fill="#1c1c1c" stroke="#6434c6" stroke-width="2.3"/><circle cx="10" cy="10" r="5.6" fill="#c59cff"/></svg></svg>
<span class="jp rl" style="left:557px;top:85px;width:67px;height:11px;color:#fff;font-size:8.75px;line-height:11px;font-weight:700;transform:scaleX(0.739);">ノイズキャンセリング</span>
<svg class="b" style="left:540px;top:103px;width:15px;height:14px;" viewBox="0 0 15 14"><svg x="1.60" y="1.10" width="11.60" height="11.60" viewBox="0 0 20 20" preserveAspectRatio="none" overflow="visible"><circle cx="10" cy="10" r="8.7" fill="none" stroke="#b4b4b4" stroke-width="1.9"/></svg></svg>
<span class="jp rl" style="left:557px;top:105px;width:51px;height:11px;color:#e6e6e6;font-size:8.95px;line-height:11px;font-weight:700;transform:scaleX(0.90);">外音取り込み</span>
<svg class="b" style="left:540px;top:122px;width:15px;height:15px;" viewBox="0 0 15 15"><svg x="1.60" y="1.70" width="11.60" height="11.60" viewBox="0 0 20 20" preserveAspectRatio="none" overflow="visible"><circle cx="10" cy="10" r="8.7" fill="none" stroke="#b4b4b4" stroke-width="1.9"/></svg></svg>
<span class="lt rl" style="left:557px;top:125px;font-size:87.57px;line-height:87.57px;transform:translate(0.88px,0.60px) scale(0.0885,0.1000);color:#ececec;font-weight:700;">OFF</span>
<label class="jp lbl" style="left:541px;top:150px;width:72px;height:11px;color:#b6b6b6;font-size:8.84px;line-height:11px;font-weight:700;transform:scaleX(0.876);">外音取り込みレベル</label>
<div class="b slider" style="left:544px;top:172px;width:296px;height:3px;"><svg class="f" viewBox="0 0 296 3"><rect x="0.00" y="0.60" width="295.60" height="2.40" fill="#8e8e8e"/></svg></div>
<label class="jp lbl" style="left:542px;top:190px;width:54px;height:10px;color:#b6b6b6;font-size:8.72px;line-height:10px;font-weight:700;transform:scaleX(0.748);">ボイスフォーカス</label>
<svg class="b" style="left:598px;top:189px;width:12px;height:12px;color:#c8c8c8;" viewBox="0 0 12 12"><svg x="1.35" y="1.55" width="8.90" height="8.90" viewBox="0 0 20 20" preserveAspectRatio="none" overflow="visible"><circle cx="10" cy="10" r="8.9" fill="none" stroke="currentColor" stroke-width="2"/><path d="M6.700 8.100a3.400 3.400 0 1 1 5.200 2.900c-1.200.700-1.700 1.300-1.700 2.600" fill="none" stroke="currentColor" stroke-width="2.100"/><circle cx="10.150" cy="15.700" r="1.250" fill="currentColor"/></svg></svg>
<svg class="b" style="left:540px;top:206px;width:66px;height:16px;" viewBox="0 0 66 16"><svg x="1.90" y="1.90" width="62.20" height="12.80" viewBox="0 0 62.200 12.800" preserveAspectRatio="none" overflow="visible"><rect width="62.20" height="12.80" fill="#474747"/><path d="M35.60 0H62.20V12.80H26.20z" fill="#333333"/></svg></svg>
<span class="lt tgl" style="left:547px;top:210px;font-size:79.10px;line-height:79.10px;transform:translate(0.85px,0.73px) scale(0.0932,0.1000);color:#8c8c8c;">OFF</span>
<span class="lt tgl" style="left:584px;top:210px;font-size:79.10px;line-height:79.10px;transform:translate(0.59px,0.73px) scale(0.1097,0.1000);color:#808080;">ON</span>
</section>
<section class="vol">
<h2 class="jp h1" style="left:541px;top:261px;width:31px;height:16px;color:#fff;font-size:13.9px;line-height:16px;font-weight:500;transform:scaleX(1.065);">音量</h2>
<label class="jp lbl" style="left:541px;top:289px;width:45px;height:11px;color:#b6b6b6;font-size:8.31px;line-height:11px;font-weight:700;transform:scaleX(0.877);">マスター音量</label>
<div class="b slider" style="left:544px;top:311px;width:296px;height:3px;"><svg class="f" viewBox="0 0 296 3"><rect x="0.00" y="0.20" width="295.60" height="2.60" fill="#7c7c7c"/></svg></div>
<div class="b sliderfill" style="left:544px;top:311px;width:276px;height:3px;"><svg class="f" viewBox="0 0 276 3"><rect x="0.00" y="0.00" width="276.00" height="3.00" fill="#642abd"/></svg></div>
<svg class="b" style="left:816px;top:306px;width:8px;height:13px;" viewBox="0 0 8 13"><svg x="1.20" y="1.40" width="5.60" height="10.20" viewBox="0 0 5.6 10.2" preserveAspectRatio="none" overflow="visible"><rect x=".4" y=".4" width="4.8" height="9.4" fill="#fff" stroke="#3a1f70" stroke-width=".8"/></svg></svg>
<label class="jp lbl" style="left:541px;top:329px;width:78px;height:11px;color:#b6b6b6;font-size:7.83px;line-height:11px;font-weight:700;transform:scaleX(0.855);">ゲーム/チャットバランス</label>
<svg class="b" style="left:540px;top:353px;width:18px;height:13px;" viewBox="0 0 18 13"><svg x="1.90" y="1.40" width="14.60" height="10.00" viewBox="0 0 14.6 10" preserveAspectRatio="none" overflow="visible"><path d="M3.1.5C4.100.2 4.900.5 5.500 1H9.100C9.700.5 10.500.2 11.500.5c1.200.4 1.700 1.500 2 3.100l.8 4.600c.2 1.200-.3 1.600-1.200 1.600h-1.200c-.7 0-1.100-.3-1.500-.9L9.300 6.700H5.300L4.200 8.900c-.4.600-.8.900-1.500.9H1.500C.600 9.800.100 9.400.300 8.200l.8-4.600C1.400 2 1.900.9 3.100.5z" fill="#fff"/></svg></svg>
<div class="b slider" style="left:571px;top:358px;width:242px;height:3px;"><svg class="f" viewBox="0 0 242 3"><rect x="0.50" y="0.20" width="240.70" height="2.60" fill="#7c7c7c"/></svg></div>
<div class="b sliderfill" style="left:571px;top:357px;width:121px;height:4px;"><svg class="f" viewBox="0 0 121 4"><rect x="0.50" y="0.90" width="120.50" height="3.10" fill="#642abd"/></svg></div>
<div class="b tick" style="left:691px;top:346px;width:2px;height:7px;"><svg class="f" viewBox="0 0 2 7"><rect x="0.40" y="0.80" width="1.00" height="5.50" fill="#6a6a6a"/></svg></div>
<div class="b tick" style="left:691px;top:366px;width:2px;height:7px;"><svg class="f" viewBox="0 0 2 7"><rect x="0.40" y="0.80" width="1.00" height="5.50" fill="#6a6a6a"/></svg></div>
<svg class="b" style="left:688px;top:353px;width:8px;height:13px;" viewBox="0 0 8 13"><svg x="1.20" y="1.40" width="5.60" height="10.30" viewBox="0 0 5.6 10.3" preserveAspectRatio="none" overflow="visible"><rect x=".4" y=".4" width="4.8" height="9.5" fill="#fff" stroke="#3a1f70" stroke-width=".8"/></svg></svg>
<svg class="b" style="left:826px;top:352px;width:17px;height:15px;" viewBox="0 0 17 15"><svg x="1.70" y="1.00" width="13.40" height="12.80" viewBox="0 0 13.4 12.8" preserveAspectRatio="none" overflow="visible"><path d="M.3.3H13.1V10.2H3.100L.3 12.600z" fill="#fff"/></svg></svg>
<div class="b dot" style="left:624px;top:507px;width:2px;height:2px;"><svg class="f" viewBox="0 0 2 2"><rect x="0.60" y="0.60" width="1.00" height="1.00" fill="#c81e46"/></svg></div>
</section>
<section class="mic">
<h2 class="jp h1" style="left:871px;top:35px;width:35px;height:16px;color:#fff;font-size:15.06px;line-height:16px;font-weight:500;transform:scaleX(0.748);">マイク</h2>
<label class="jp lbl" style="left:871px;top:63px;width:39px;height:10px;color:#b6b6b6;font-size:8.31px;line-height:10px;font-weight:700;transform:scaleX(0.90);">マイク音量</label>
<div class="b slider" style="left:874px;top:85px;width:296px;height:3px;"><svg class="f" viewBox="0 0 296 3"><rect x="0.00" y="0.10" width="295.20" height="2.40" fill="#8e8e8e"/></svg></div>
<label class="jp lbl" style="left:872px;top:102px;width:79px;height:11px;color:#b6b6b6;font-size:8.69px;line-height:11px;font-weight:700;transform:scaleX(0.738);">オートゲインコントロール</label>
<svg class="b" style="left:954px;top:102px;width:12px;height:11px;color:#c8c8c8;" viewBox="0 0 12 11"><svg x="1.55" y="1.05" width="8.90" height="8.90" viewBox="0 0 20 20" preserveAspectRatio="none" overflow="visible"><circle cx="10" cy="10" r="8.9" fill="none" stroke="currentColor" stroke-width="2"/><path d="M6.700 8.100a3.400 3.400 0 1 1 5.200 2.900c-1.200.700-1.700 1.300-1.700 2.600" fill="none" stroke="currentColor" stroke-width="2.100"/><circle cx="10.150" cy="15.700" r="1.250" fill="currentColor"/></svg></svg>
<svg class="b" style="left:870px;top:119px;width:66px;height:16px;" viewBox="0 0 66 16"><svg x="1.90" y="1.40" width="62.50" height="12.80" viewBox="0 0 62.500 12.800" preserveAspectRatio="none" overflow="visible"><rect width="62.50" height="12.80" fill="#383838"/><path d="M36.20 0H62.50V12.80H26.40z" fill="#6a2cc6"/></svg></svg>
<span class="lt tgl" style="left:877px;top:122px;font-size:80.51px;line-height:80.51px;transform:translate(0.65px,0.90px) scale(0.0929,0.1000);color:#8a8a8a;">OFF</span>
<span class="lt tgl" style="left:914px;top:122px;font-size:80.51px;line-height:80.51px;transform:translate(0.64px,0.90px) scale(0.1098,0.1000);color:#fff;font-weight:700;">ON</span>
<label class="jp lbl" style="left:1031px;top:102px;width:42px;height:11px;color:#b6b6b6;font-size:8.72px;line-height:11px;font-weight:700;transform:scaleX(0.766);">マイクテスト</label>
<button class="b btn2" style="left:1031px;top:120px;width:76px;height:21px;"><svg class="f" viewBox="0 0 76 21"><rect x="0.90" y="0.40" width="75.00" height="20.20" fill="#2e2e2e"/></svg></button>
<span class="jp btntxt" style="left:1050px;top:125px;width:38px;height:11px;color:#a8a8a8;font-size:8.9px;line-height:11px;font-weight:500;transform:scaleX(0.819);">テスト開始</span>
<label class="jp lbl" style="left:871px;top:151px;width:40px;height:11px;color:#b6b6b6;font-size:9.38px;line-height:11px;font-weight:700;transform:scaleX(0.675);">サイドトーン</label>
<div class="b slider" style="left:874px;top:173px;width:296px;height:3px;"><svg class="f" viewBox="0 0 296 3"><rect x="0.00" y="0.80" width="295.20" height="2.20" fill="#4e4e4e"/></svg></div>
<div class="b sliderfill" style="left:874px;top:173px;width:119px;height:4px;"><svg class="f" viewBox="0 0 119 4"><rect x="0.00" y="0.70" width="118.60" height="2.40" fill="#8e8e8e"/></svg></div>
</section>
</body></html>
